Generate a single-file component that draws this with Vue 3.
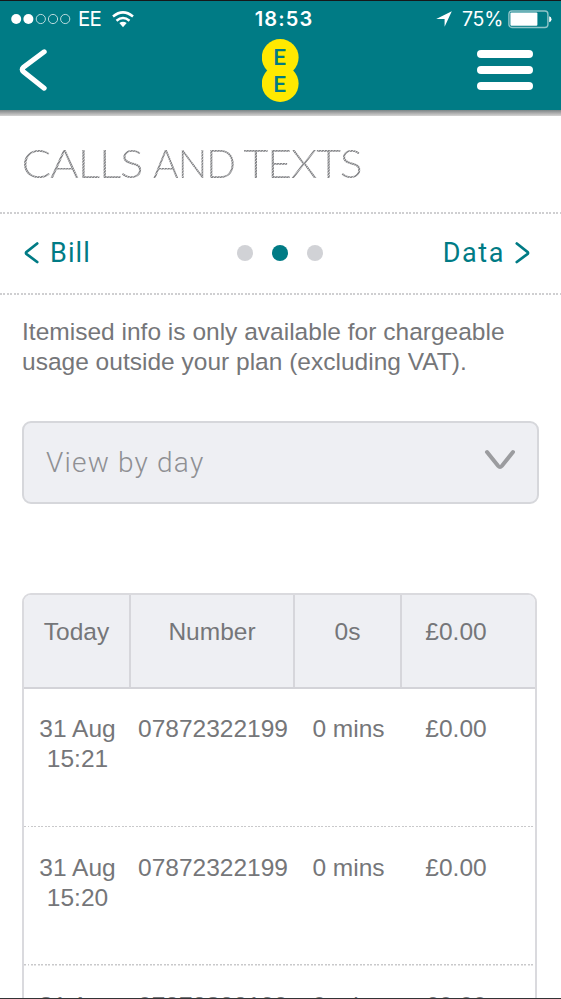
<script setup>
const columns = ['Today', 'Number', '0s', '£0.00']
const calls = [
  { day: '31 Aug', time: '15:21', number: '07872322199', length: '0 mins', cost: '£0.00' },
  { day: '31 Aug', time: '15:20', number: '07872322199', length: '0 mins', cost: '£0.00' },
  { day: '31 Aug', time: '', number: '07872322199', length: '0 mins', cost: '£0.00' }
]
</script>

<template>
  <div class="screen">
    <header class="top">
      <div class="status">
        <div class="side">
          <svg class="signal" width="60" height="12" viewBox="0 0 60 12">
            <circle cx="5.2" cy="6" r="5" fill="#fff" />
            <circle cx="17.4" cy="6" r="5" fill="#fff" />
            <g fill="none" stroke="#b9dadd" stroke-width="1">
              <circle cx="29.8" cy="6" r="4.6" />
              <circle cx="42" cy="6" r="4.6" />
              <circle cx="54.2" cy="6" r="4.6" />
            </g>
          </svg>
          <span class="carrier">EE</span>
          <svg class="wifi" width="22" height="17" viewBox="0 0 22 17">
            <g fill="none" stroke="#fff" stroke-width="2.5">
              <path d="M1 5.5 Q11 -2.8 21 5.5" />
              <path d="M4.5 9.7 Q11 4.4 17.5 9.7" />
            </g>
            <path d="M7.3 12.1 Q11 9.2 14.7 12.1 L11 16.2Z" fill="#fff" />
          </svg>
        </div>
        <span class="clock">18:53</span>
        <div class="side right">
          <svg class="locate" width="16" height="16" viewBox="0 0 16 16"><path d="M.2 8 15.8.2 8.6 15.8V8Z" fill="#fff" /></svg>
          <span class="percent">75%</span>
          <svg class="battery" width="44" height="19" viewBox="0 0 44 19">
            <rect x=".9" y="1" width="39" height="16.5" rx="3" fill="none" stroke="#8fc4c8" stroke-width="1.4" />
            <rect x="2.4" y="2.6" width="27" height="13.2" rx="1" fill="#fff" />
            <path d="M41.2 6.2Q43.5 6.8 43.5 9.2T41.2 12.3Z" fill="#fff" />
          </svg>
        </div>
      </div>
      <div class="bar">
        <svg class="back" width="30" height="46" viewBox="0 0 30 46"><path d="M27.2 4.8 6.5 20.3Q3.8 22.5 6.5 24.7L27.2 41.2" fill="none" stroke="#fff" stroke-width="5" stroke-linecap="round" /></svg>
        <svg class="logo" width="38" height="64" viewBox="0 0 38 64">
          <g fill="#ffe900"><circle cx="18.2" cy="18.4" r="18.4" /><circle cx="18.2" cy="44.6" r="18.4" /></g>
          <g class="logo-text" fill="#007b85"><text x="11.2" y="26">E</text><text x="11.2" y="53">E</text></g>
        </svg>
        <div class="menu"><i></i><i></i><i></i></div>
      </div>
    </header>
    <div class="shade"></div>
    <h1 class="title">
      <svg width="561" height="97" viewBox="0 0 561 97">
        <defs>
          <pattern id="dots" width="2.05" height="2.05" patternUnits="userSpaceOnUse" patternTransform="rotate(45)">
            <rect width="2.05" height="2.05" fill="#fff" fill-opacity=".4" />
            <rect width="1.3" height="2.05" fill="#fff" />
          </pattern>
          <mask id="dotted" maskUnits="userSpaceOnUse" x="0" y="0" width="561" height="97"><rect width="561" height="97" fill="url(#dots)" /></mask>
        </defs>
        <g class="title-text" mask="url(#dotted)">
          <text x="21.5" y="62" textLength="121" lengthAdjust="spacingAndGlyphs">CALLS</text>
          <text x="153" y="62" textLength="82" lengthAdjust="spacingAndGlyphs">AND</text>
          <text x="243.5" y="62" textLength="118" lengthAdjust="spacingAndGlyphs">TEXTS</text>
        </g>
      </svg>
    </h1>
    <div class="dots"></div>
    <nav class="pager">
      <a class="link">
        <svg width="16" height="22" viewBox="0 0 16 22"><path d="M13.2 1.5 2.5 10Q1.6 11 2.5 12L13.2 20" /></svg>
        <span class="bill">Bill</span>
      </a>
      <div class="pages"><i></i><i class="on"></i><i></i></div>
      <a class="link next">
        <span class="data">Data</span>
        <svg width="16" height="22" viewBox="0 0 16 22"><path d="M1.8 1.5 12.5 10Q13.4 11 12.5 12L1.8 20" /></svg>
      </a>
    </nav>
    <div class="dots"></div>
    <p class="info">Itemised info is only available for chargeable<br />usage outside your plan (excluding VAT).</p>
    <div class="select">
      <span>View by day</span>
      <svg width="32" height="24" viewBox="0 0 32 24"><path d="M4 3 15.2 17Q17 19 18.8 17L30 3" fill="none" stroke="#9b9c9f" stroke-width="4" stroke-linecap="round" /></svg>
    </div>
    <section class="table">
      <div class="row head">
        <div v-for="c in columns" :key="c" class="cell">{{ c }}</div>
      </div>
      <div v-for="(c, i) in calls" :key="i" class="row">
        <div class="cell">{{ c.day }}<br />{{ c.time }}</div>
        <div class="cell">{{ c.number }}</div>
        <div class="cell">{{ c.length }}</div>
        <div class="cell">{{ c.cost }}</div>
      </div>
    </section>
  </div>
</template>

<style>
body { margin: 0; background: #fff; }
</style>

<style scoped>
.screen {
  box-sizing: border-box;
  width: 561px;
  height: 999px;
  overflow: hidden;
  background: #fff;
  border-top: 1px solid #16181a;
  border-bottom: 1px solid #333436;
  font-family: "Liberation Sans", Arial, sans-serif;
  color: #757679;
}
.top { height: 109px; background: #007b85; color: #fff; }
.status {
  height: 36px;
  display: grid;
  grid-template-columns: 1fr auto 1fr;
  align-items: center;
  padding: 0 9px 0 11px;
  font-family: Inter, sans-serif;
  font-size: 20px;
  line-height: 24px;
}
.side { display: flex; align-items: center; }
.right { justify-content: flex-end; }
.carrier { margin-left: 7px; font-size: 20.5px; font-weight: 400; letter-spacing: -0.7px; }
.wifi { margin-left: 11px; }
.clock { margin-left: 5px; font-weight: 600; font-size: 20px; letter-spacing: 1.1px; }
.percent { margin: 0 5px 0 10px; font-size: 19.5px; font-weight: 400; letter-spacing: -0.3px; }
.bar { height: 73px; display: grid; grid-template-columns: 1fr 38px 1fr; padding: 0 28px; }
.back { margin: 10px 0 0 -11px; }
.logo { margin-top: 2px; }
.logo-text { font: 500 22.5px Roboto, sans-serif; }
.menu { justify-self: end; width: 56px; margin-top: 13px; display: flex; flex-direction: column; gap: 8px; }
.menu i { height: 8px; border-radius: 4px; background: #fff; }
.shade { height: 6px; background: linear-gradient(#7c8586, #b3b3b3 60%, #d4d4d4); }
.title { margin: 0; height: 96px; overflow: hidden; }
.title svg { display: block; }
.title-text { font: 300 39px Lato, sans-serif; fill: #808184; letter-spacing: -1px; }
.dots { height: 2px; background: repeating-linear-gradient(90deg, #cfcfd1 0 1.75px, #fff 1.75px 3.5px); }
.pager { height: 79px; display: grid; grid-template-columns: 1fr auto 1fr; align-items: center; padding: 0 30px 2px; box-sizing: border-box; }
.link { display: flex; align-items: center; color: #007b85; font: 400 27px/32px Roboto, sans-serif; margin-left: -6px; }
.link svg { fill: none; stroke: currentColor; stroke-width: 2.8; stroke-linecap: round; }
.bill { margin-left: 10px; letter-spacing: 1.1px; }
.next { justify-content: flex-end; margin-left: 0; }
.data { margin-right: 10px; letter-spacing: 1.6px; }
.pages { display: flex; gap: 19px; margin-right: 0.5px; }
.pages i { width: 16px; height: 16px; border-radius: 50%; background: #d1d2d6; }
.pages .on { background: #007b85; }
.info { margin: 22px 0 0 22px; font-size: 24.5px; line-height: 30px; letter-spacing: 0.01px; white-space: nowrap; }
.select {
  box-sizing: border-box;
  width: 517px;
  height: 83px;
  margin: 44px 0 0 22px;
  padding: 0 22px 0 22px;
  display: flex;
  align-items: center;
  justify-content: space-between;
  border: 2px solid #d6d7db;
  border-radius: 9px;
  background: #eeeff3;
  color: #8f9093;
  font: 300 28px/32px Roboto, sans-serif;
  letter-spacing: 1.2px;
}
.select svg { margin-top: -4px; }
.table {
  box-sizing: border-box;
  width: 515px;
  height: 500px;
  margin: 88.5px 0 0 22px;
  border: 2px solid #dadade;
  border-radius: 9px;
  overflow: hidden;
  font-size: 24.5px;
  line-height: 30px;
}
.row {
  display: grid;
  grid-template-columns: 107px 164px 107px 1fr;
  box-sizing: border-box;
  height: 138.5px;
  background: repeating-linear-gradient(90deg, #c9c9cb 0 1.75px, #fff 1.75px 3.5px) bottom / 100% 1.5px no-repeat;
}
.head { height: 94px; background: #eeeff3; border-bottom: 2px solid #d3d3d8; }
.cell { box-sizing: border-box; padding-top: 25.5px; text-align: center; white-space: nowrap; }
.head .cell { padding-top: 22px; border-right: 2px solid #d6d6db; }
.cell:last-child { padding-right: 25px; border-right: 0; }
</style>
